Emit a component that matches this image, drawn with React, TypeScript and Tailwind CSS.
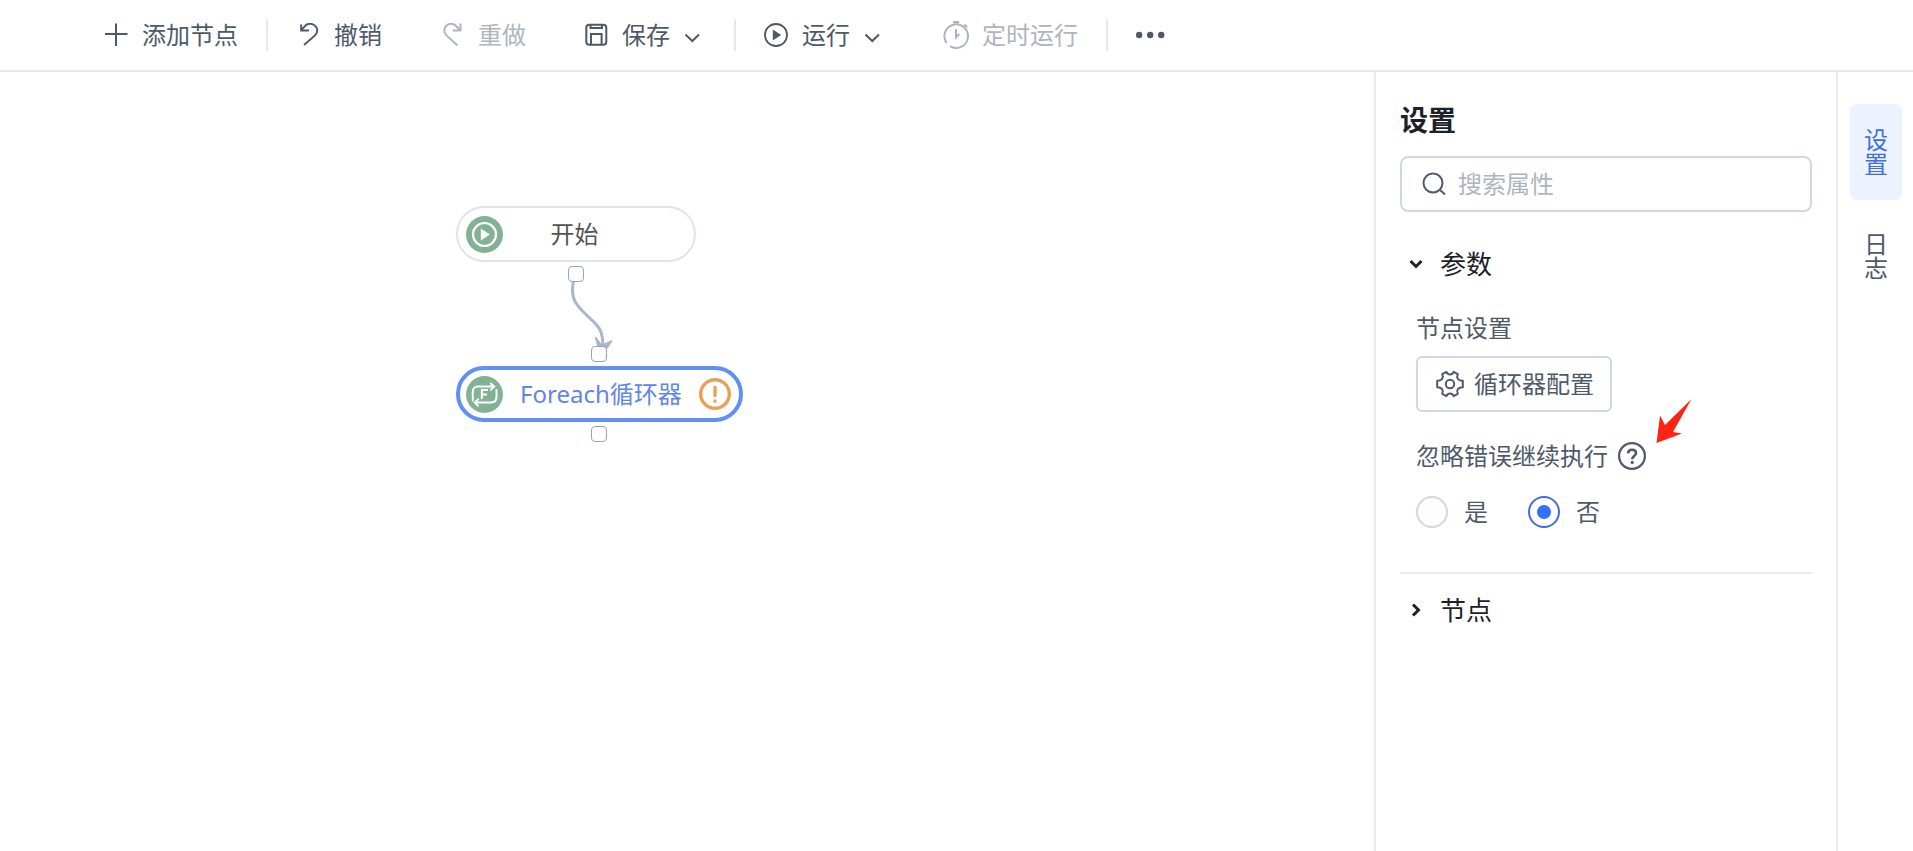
import { useState } from "react";
import type { ReactNode } from "react";
import clsx from "clsx";

interface ToolButtonProps {
  icon: ReactNode;
  label: string;
  disabled?: boolean;
  dropdown?: boolean;
}

function PlusIcon() {
  return (
    <svg width="24" height="24" viewBox="0 0 24 24" fill="none" stroke="currentColor" strokeWidth="2" aria-hidden="true">
      <path d="M12 0.500V23M1 11H23.500" />
    </svg>
  );
}

function UndoIcon() {
  return (
    <svg width="24" height="24" viewBox="0 0 24 24" fill="none" stroke="currentColor" strokeWidth="2" aria-hidden="true">
      <path d="M5.200 1.500V7.600H13" />
      <path d="M5.400 7.200L9.200 2.800C12 -0.200 17.500 0.200 20 3.800C22 6.700 21.300 10 19 12.400L8 22" />
    </svg>
  );
}

function RedoIcon() {
  return (
    <svg width="24" height="24" viewBox="0 0 24 24" fill="none" stroke="currentColor" strokeWidth="2" aria-hidden="true">
      <path d="M20.500 0.500V7.500H13" />
      <path d="M20.200 7.200L15.500 2.500C12.500 -0.300 8 0.300 5.600 3.600C3.600 6.600 4.200 10 6.500 12.400L17.500 22.500" />
    </svg>
  );
}

function SaveIcon() {
  return (
    <svg width="24" height="24" viewBox="0 0 24 24" fill="none" stroke="currentColor" strokeWidth="2" aria-hidden="true">
      <rect x="2.300" y="1.700" width="20" height="20" rx="3" />
      <path d="M6.500 2V5H18V2M7 21.500V11H17.600V21.500" />
    </svg>
  );
}

function RunIcon() {
  return (
    <svg width="24" height="24" viewBox="0 0 24 24" fill="none" stroke="currentColor" strokeWidth="1.800" aria-hidden="true">
      <circle cx="12" cy="12" r="11" />
      <path d="M8.800 6.400V17.600L17.200 12Z" fill="currentColor" stroke="none" />
    </svg>
  );
}

function TimerIcon() {
  return (
    <svg width="26" height="28" viewBox="0 0 26 28" fill="none" stroke="currentColor" strokeWidth="2" aria-hidden="true" className="-mx-px shrink-0">
      <path d="M3.600 22A11.800 11.800 0 1 1 7 25.200" />
      <path d="M10 1.200H16" strokeWidth="2.400" />
      <path d="M21.200 3.400L24.200 6.200M13 8V16.500L16.300 13" />
    </svg>
  );
}

function DropArrow() {
  return (
    <svg width="24" height="24" viewBox="0 0 24 24" fill="none" stroke="currentColor" strokeWidth="2" aria-hidden="true" className="ml-3">
      <path d="M3.500 11.500L10.300 18L17 11.500" />
    </svg>
  );
}

function GearIcon() {
  return (
    <svg width="28" height="28" viewBox="0 0 28 28" fill="none" stroke="currentColor" strokeWidth="2" strokeLinejoin="round" aria-hidden="true">
      <circle cx="14" cy="14" r="4.200" />
      <path d="M10.400 1.800C11.200 3.600 12.400 4.400 14 4.400S16.800 3.600 17.600 1.800L21.800 4.200C20.900 5.900 21 7.400 21.800 8.700S23.900 10.700 26.800 10.800V17.200C23.900 17.300 22.600 18 21.800 19.300S20.900 22.100 21.800 23.800L17.600 26.200C16.800 24.400 15.600 23.600 14 23.600S11.200 24.400 10.400 26.200L6.200 23.800C7.100 22.100 7 20.600 6.200 19.300S4.100 17.300 1.200 17.200V10.800C4.100 10.700 5.400 10 6.200 8.700S7.100 5.900 6.200 4.200Z" />
    </svg>
  );
}

function StartIcon() {
  return (
    <svg width="37" height="37" viewBox="0 0 37 37" fill="none" aria-hidden="true">
      <circle cx="18.500" cy="18.500" r="18.500" fill="#81b294" />
      <circle cx="18.500" cy="18.500" r="11.500" stroke="#fff" strokeWidth="2.200" />
      <path d="M14.800 12.500V24.500L23.800 18.500Z" fill="#fff" />
    </svg>
  );
}

function LoopIcon() {
  return (
    <svg width="37" height="37" viewBox="0 0 37 37" fill="none" stroke="#fff" strokeWidth="2" strokeLinecap="round" aria-hidden="true">
      <circle cx="18.500" cy="18.500" r="18.500" fill="#81b294" stroke="none" />
      <path d="M6.800 24.500V16C6.800 12.500 8.500 10.500 12 10.500H28M24.800 7.500L28.300 10.500L24.800 13.800" />
      <path d="M30.500 14V20.500C30.500 24.500 28.500 26.500 25 26.500H9M12.200 23.300L8.700 26.500L12.200 29.700" />
      <path d="M15.800 23V14H22M15.800 18.500H21" strokeLinecap="butt" />
    </svg>
  );
}

function WarningIcon() {
  return (
    <svg width="32" height="32" viewBox="0 0 32 32" fill="none" stroke="#eb9f54" strokeWidth="3.400" strokeLinecap="round" aria-hidden="true">
      <circle cx="16" cy="16" r="14.300" />
      <path d="M16 9.500V17.500M16 23V23.200" />
    </svg>
  );
}

function ToolButton({ icon, label, disabled, dropdown }: ToolButtonProps) {
  return (
    <button
      type="button"
      disabled={disabled}
      className="flex items-center px-7 text-2xl leading-8 text-[#4e5969] disabled:text-[#aeb5bf]"
    >
      <span className="mr-[14px] flex w-6 justify-center">{icon}</span>
      {label}
      {dropdown && <DropArrow />}
    </button>
  );
}

function Divider() {
  return <div className="h-8 w-[2px] bg-[#e5e8ef]" />;
}

function Toolbar() {
  return (
    <header className="flex h-[72px] shrink-0 items-center border-b-2 border-[#e8e8ea] pl-[76px]">
      <ToolButton icon={<PlusIcon />} label="添加节点" />
      <Divider />
      <div className="flex gap-[2px]">
        <ToolButton icon={<UndoIcon />} label="撤销" />
        <ToolButton icon={<RedoIcon />} label="重做" disabled />
        <ToolButton icon={<SaveIcon />} label="保存" dropdown />
      </div>
      <Divider />
      <div className="flex gap-[2px]">
        <ToolButton icon={<RunIcon />} label="运行" dropdown />
        <ToolButton icon={<TimerIcon />} label="定时运行" disabled />
      </div>
      <Divider />
      <button type="button" aria-label="更多" className="px-7 text-[#4e5969]">
        <svg width="30" height="8" viewBox="0 0 30 8" fill="currentColor" aria-hidden="true">
          <circle cx="3.200" cy="4" r="3.200" />
          <circle cx="14.200" cy="4" r="3.200" />
          <circle cx="25.200" cy="4" r="3.200" />
        </svg>
      </button>
    </header>
  );
}

function Handle({ className }: { className: string }) {
  return <span className={clsx("absolute size-4 rounded-sm border border-[#93a5be] bg-white", className)} />;
}

// Node positions are canvas coordinates, relative to the top left of the canvas.
function Canvas() {
  return (
    <main className="relative min-w-0 flex-1 overflow-hidden">
      <svg className="absolute top-[206px] left-[560px]" width="60" height="72" viewBox="0 0 60 72" fill="none" aria-hidden="true">
        <path d="M13.500 3C10 20 15 26 27 37.500C38 48 43 50 43 70" stroke="#a9b8cc" strokeWidth="3" />
        <path d="M35.500 59.500L38.500 70H47L51.500 63L44 66.500H41Z" fill="#a9b8cc" stroke="#a9b8cc" strokeWidth="1.500" strokeLinejoin="round" />
      </svg>

      <div className="absolute top-[134px] left-[456px] flex h-14 w-60 items-center rounded-full border-2 border-[#e1e2ea] bg-white pl-2 text-2xl text-[#555]">
        <StartIcon />
        <span className="flex-1 pr-12 text-center">开始</span>
      </div>
      <Handle className="top-[194px] left-[568px]" />

      <Handle className="top-[274px] left-[591px]" />
      <div className="absolute top-[294px] left-[456px] flex h-14 w-[287px] items-center justify-between rounded-full border-4 border-[#5f8ff7] bg-white pr-2 pl-[6px] text-2xl text-[#5f86e8]">
        <LoopIcon />
        <span>Foreach循环器</span>
        <WarningIcon />
      </div>
      <Handle className="top-[354px] left-[591px]" />
    </main>
  );
}

function SettingsPanel() {
  const [ignoreError, setIgnoreError] = useState("no");
  const options = [
    { value: "yes", label: "是" },
    { value: "no", label: "否" },
  ];

  return (
    <aside className="w-[462px] shrink-0 border-l-2 border-[#e9ebf1] px-6 pt-7">
      <h2 className="text-[28px] leading-10 font-bold text-[#1d2129]">设置</h2>

      <label className="mt-4 flex h-14 items-center gap-3 rounded-lg border-2 border-[#d3d7e4] px-5">
        <svg width="24" height="24" viewBox="0 0 24 24" fill="none" stroke="#4e5969" strokeWidth="2" aria-hidden="true">
          <circle cx="11" cy="11" r="9.500" />
          <path d="M17.800 17.800L23 22.500" />
        </svg>
        <input
          type="text"
          aria-label="搜索属性"
          placeholder="搜索属性"
          className="min-w-0 flex-1 text-2xl text-[#4e5969] outline-none placeholder:text-[#aeb5bf]"
        />
      </label>

      <section className="mt-8 border-b-2 border-[#e9ebf1] pb-11">
        <button type="button" className="flex h-10 items-center gap-4 pl-2 text-[26px] text-[#1d2129]">
          <svg width="16" height="16" viewBox="0 0 16 16" fill="none" stroke="currentColor" strokeWidth="3" aria-hidden="true">
            <path d="M2.500 5L8 10.500L13.500 5" />
          </svg>
          参数
        </button>

        <div className="flex flex-col items-start px-4 pt-7 text-2xl leading-8 text-[#4e5969]">
          <span>节点设置</span>
          <button type="button" className="mt-3 flex h-14 items-center gap-[10px] rounded-md border-2 border-[#d3d7e4] pr-4 pl-[18px]">
            <GearIcon />
            循环器配置
          </button>

          <div className="relative mt-7 flex items-center gap-[10px]">
            <span id="ignore-error">忽略错误继续执行</span>
            <button type="button" aria-label="帮助">
              <svg width="28" height="28" viewBox="0 0 28 28" fill="none" stroke="currentColor" strokeWidth="2.200" aria-hidden="true">
                <circle cx="14" cy="14" r="12.900" />
                <path d="M10 11.300C10.200 8.900 11.700 7.700 14 7.700C16.400 7.700 18 9 18 11C18 14 14.200 14 14.200 17.200" strokeWidth="2.600" />
                <circle cx="14.200" cy="20.400" r="1.600" fill="currentColor" stroke="none" />
              </svg>
            </button>
            <svg className="absolute bottom-7 left-[239px]" width="38" height="46" viewBox="0 0 38 46" fill="#ff2412" aria-hidden="true">
              <path d="M36.500 1L18 34L27 35.500L1.500 45L5 17.500L10 27Z" />
            </svg>
          </div>

          <div role="radiogroup" aria-labelledby="ignore-error" className="mt-6 flex gap-10">
            {options.map((option) => (
              <label key={option.value} className="flex items-center gap-4">
                <input
                  type="radio"
                  name="ignoreError"
                  value={option.value}
                  checked={ignoreError === option.value}
                  onChange={() => setIgnoreError(option.value)}
                  className="grid size-8 appearance-none place-content-center rounded-full border-2 border-[#d3d7e4] before:size-[14px] before:rounded-full checked:border-[#3f70e0] checked:before:bg-[#3370ff]"
                />
                {option.label}
              </label>
            ))}
          </div>
        </div>
      </section>

      <section className="pt-4">
        <button type="button" className="flex h-10 items-center gap-4 pl-2 text-[26px] text-[#1d2129]">
          <svg width="16" height="16" viewBox="0 0 16 16" fill="none" stroke="currentColor" strokeWidth="3" aria-hidden="true">
            <path d="M5 2.500L10.500 8L5 13.500" />
          </svg>
          节点
        </button>
      </section>
    </aside>
  );
}

function SideTabs() {
  const [active, setActive] = useState("设置");

  return (
    <nav className="flex w-[77px] shrink-0 flex-col gap-2 border-l-2 border-[#e9ebf1] pt-8 pl-3">
      {["设置", "日志"].map((tab) => (
        <button
          key={tab}
          type="button"
          onClick={() => setActive(tab)}
          className={clsx(
            "flex h-24 w-[52px] items-center justify-center rounded-md text-2xl leading-6",
            active === tab ? "bg-[#edf2ff] text-[#3f70e0]" : "text-[#4e5969]"
          )}
        >
          <span className="w-6 break-all">{tab}</span>
        </button>
      ))}
    </nav>
  );
}

export default function App() {
  return (
    <div className="flex min-h-screen flex-col bg-white font-['Noto_Sans','Noto_Sans_CJK_SC',sans-serif]">
      <Toolbar />
      <div className="flex flex-1">
        <Canvas />
        <SettingsPanel />
        <SideTabs />
      </div>
    </div>
  );
}
